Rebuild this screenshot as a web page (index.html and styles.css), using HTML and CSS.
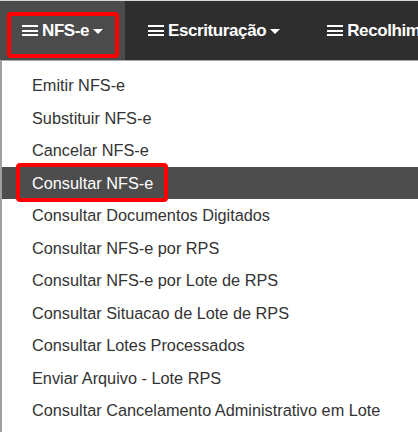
FILE: index.html
```html
<!DOCTYPE html>
<html lang="pt-BR">
<head>
  <meta charset="UTF-8" />
  <title>NFS-e</title>
  <link rel="stylesheet" href="styles.css">
</head>
<body>
  <div class="navbar">
    <div class="nav-item active">
      <span class="burger"></span>NFS-e<span class="caret"></span>
      <div class="mark mark-tab"></div>
    </div>
    <div class="nav-item">
      <span class="burger"></span>Escrituração<span class="caret"></span>
    </div>
    <div class="nav-item last">
      <span class="burger"></span>Recolhimento
    </div>
  </div>

  <ul class="dropdown">
    <li>Emitir NFS-e</li>
    <li>Substituir NFS-e</li>
    <li>Cancelar NFS-e</li>
    <li class="selected">Consultar NFS-e<div class="mark mark-item"></div></li>
    <li>Consultar Documentos Digitados</li>
    <li>Consultar NFS-e por RPS</li>
    <li>Consultar NFS-e por Lote de RPS</li>
    <li>Consultar Situacao de Lote de RPS</li>
    <li>Consultar Lotes Processados</li>
    <li>Enviar Arquivo - Lote RPS</li>
    <li>Consultar Cancelamento Administrativo em Lote</li>
  </ul>
</body>
</html>
```
FILE: styles.css
```css
body {
  margin: 0;
  font-family: "Liberation Sans", Arial, sans-serif;
  background: #ffffff;
  overflow: hidden;
  width: 418px;
  height: 432px;
}

/* Top bar */
.navbar {
  display: flex;
  height: 59px;
  background: #2e2e2e;
  border-top: 1px solid #d8d8d8;
  white-space: nowrap;
  overflow: hidden;
}

.nav-item {
  position: relative;
  display: flex;
  align-items: center;
  flex-shrink: 0;
  padding: 0 22px 0 23px;
  color: #ffffff;
  font-size: 17px;
  font-weight: bold;
  letter-spacing: -0.4px;
}

.nav-item.active {
  background: #4b4b4b;
  width: 125px;
  box-sizing: border-box;
  padding-left: 22px;
  padding-right: 0;
}

.nav-item.last {
  padding-left: 25px;
}

.burger {
  display: inline-block;
  width: 16px;
  height: 11px;
  margin-right: 4px;
  background:
    linear-gradient(#ffffff, #ffffff) 0 0 / 100% 2px no-repeat,
    linear-gradient(#ffffff, #ffffff) 0 4.5px / 100% 2px no-repeat,
    linear-gradient(#ffffff, #ffffff) 0 9px / 100% 2px no-repeat;
}

.caret {
  display: inline-block;
  width: 0;
  height: 0;
  margin-left: 4px;
  margin-top: 2px;
  border-left: 5px solid transparent;
  border-right: 5px solid transparent;
  border-top: 5px solid #ffffff;
}

/* Red highlight annotations */
.mark {
  position: absolute;
  border: 4px solid #ff0000;
  border-radius: 4px;
  box-sizing: border-box;
}

.mark-tab {
  left: 7px;
  top: 11px;
  width: 112px;
  height: 46px;
}

.mark-item {
  left: 14px;
  top: -4px;
  width: 152px;
  height: 39px;
}

/* Dropdown menu */
.dropdown {
  list-style: none;
  margin: 0;
  padding: 8px 0 0;
  border-top: 1px solid #aaaaaa;
  border-left: 2px solid #a0a0a0;
  height: 363px;
  box-sizing: content-box;
}

.dropdown li {
  position: relative;
  height: 32.5px;
  line-height: 32.5px;
  padding-left: 30px;
  font-size: 16.3px;
  color: #333333;
}

.dropdown li.selected {
  background: #4d4d4d;
  color: #ffffff;
}
```
